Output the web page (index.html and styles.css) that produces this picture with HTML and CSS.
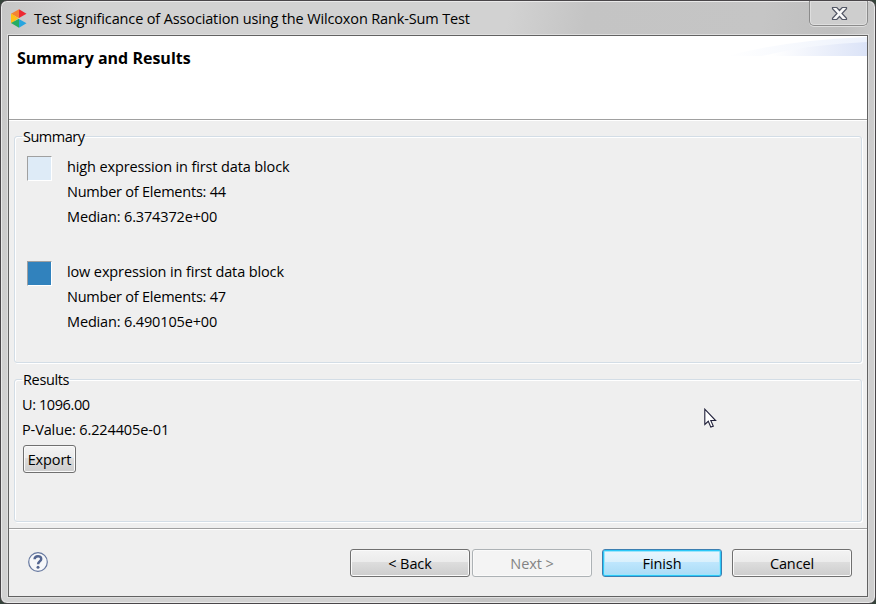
FILE: index.html
```html
<!DOCTYPE html>
<html lang="en">
<head>
<meta charset="utf-8">
<title>Test Significance of Association</title>
<link rel="stylesheet" href="styles.css">
</head>
<body>
<main class="window">
  <header class="titlebar">
    <svg class="logo" width="17" height="19" viewBox="0 0 17 19">
      <path fill="#f58232" d="M1 4.800 9 .3v8.900L1 4.800Z"/>
      <path fill="#ee2932" d="M9 .3 16.500 4.800 9 9Z"/>
      <path fill="#fdbf18" d="M1 4.800 8.500 9.300 1 14Z"/>
      <path fill="#fdbf18" d="M1 4.800 5 7v5L1 14.200Z"/>
      <path fill="#25ac62" d="M1 14 9 9.800v8.900Z"/>
      <path fill="#29a5df" d="m9 10 7.500 4.200L9 18.700Z"/>
    </svg>
    <h1 class="title">Test Significance of Association using the Wilcoxon Rank-Sum Test</h1>
    <button class="close" aria-label="Close">
      <svg width="17" height="15" viewBox="0 0 17 15"><path d="M1.500 1.500h4.300l2.700 3 2.700-3h4.300v1.200L11 7.500l4.500 4.800v1.200h-4.300l-2.700-3-2.700 3H1.500v-1.200L6 7.500 1.500 2.700Z" fill="#fafafa" stroke="#535766" stroke-width="1.200"/></svg>
    </button>
  </header>
  <section class="client">
    <div class="banner">
      <h2>Summary and Results</h2>
      <svg class="swoosh" width="140" height="20" viewBox="0 0 140 20">
        <defs>
          <linearGradient id="fade"><stop offset="0" stop-color="#fff"/><stop offset="1" stop-color="#edf2fc"/></linearGradient>
          <linearGradient id="deep"><stop offset=".1" stop-color="#fff"/><stop offset="1" stop-color="#dbe3f7"/></linearGradient>
        </defs>
        <path fill="url(#fade)" d="M0 20Q60 4 140 1v19Z"/>
        <path fill="url(#deep)" d="M35 20Q85 8 140 6v14Z"/>
      </svg>
    </div>
    <div class="content">
      <fieldset class="group summary">
        <legend><span class="w-summary">Summary</span></legend>
        <div class="block">
          <i class="swatch light"></i>
          <div class="lines">
            <p class="w-line">high expression in first data block</p>
            <p class="w-num">Number of Elements: 44</p>
            <p class="w-med">Median: 6.374372e+00</p>
          </div>
        </div>
        <div class="block">
          <i class="swatch dark"></i>
          <div class="lines">
            <p class="w-line">low expression in first data block</p>
            <p class="w-num">Number of Elements: 47</p>
            <p class="w-med">Median: 6.490105e+00</p>
          </div>
        </div>
      </fieldset>
      <fieldset class="group results">
        <legend><span class="w-results">Results</span></legend>
        <p class="w-u">U: 1096.00</p>
        <p class="w-p">P-Value: 6.224405e-01</p>
        <button class="btn export">Export</button>
      </fieldset>
    </div>
    <footer class="footer">
      <svg class="help" width="20" height="20" viewBox="0 0 20 20">
        <circle cx="10" cy="10" r="9.300" fill="#f6f7f9" stroke="#65779f" stroke-width="1.200"/>
        <path d="M6.600 7.300C6.700 3.200 13.200 3.200 13.200 6.900c0 2.500-3.100 2.500-3.100 5.300" fill="none" stroke="#536590" stroke-width="2.500"/>
        <circle cx="10" cy="15.300" r="1.500" fill="#536590"/>
      </svg>
      <button class="btn back">&lt; Back</button>
      <button class="btn next" disabled>Next &gt;</button>
      <button class="btn finish">Finish</button>
      <button class="btn cancel">Cancel</button>
    </footer>
  </section>
</main>
<svg class="cursor" width="13" height="21" viewBox="0 0 13 21">
  <path d="M.8 1.200v15.300l3.500-3.200 2.500 5.800 2.500-1-2.500-5.600h4.800Z" fill="#fff" stroke="#20203a" stroke-width="1.100"/>
</svg>
</body>
</html>
```
FILE: styles.css
```css
* { box-sizing: border-box; }
body {
  margin: 0;
  width: 876px;
  height: 604px;
  overflow: hidden;
  background: #35433a;
  font: 14.5px/25px "Open Sans", "Noto Sans", sans-serif;
  color: #000;
}
h1, h2, p { margin: 0; white-space: nowrap; }
.window {
  width: 876px;
  height: 604px;
  padding: 0 7px 6px;
  border: 1px solid #494649;
  border-radius: 7px;
  box-shadow: inset 0 0 0 1px #e9e9e9;
  background: linear-gradient(100deg, #c6c6c6 0, #d2d2d2 8%, #d2d2d2 52%, #c4c4c4 60%, #c5c5c5 78%, #bebebe 86%, #cecece 92%, #cecece 100%);
}
.titlebar {
  height: 34px;
  display: flex;
  align-items: flex-start;
}
.logo { margin: 8px 0 0 2px; }
.title {
  margin: 6px 0 0 7px;
  font-size: 14.5px;
  font-weight: 400;
  line-height: 24px;
  letter-spacing: -.14px;
}
.close {
  width: 59px;
  height: 25px;
  margin: 0 0 0 auto;
  padding: 5px 0 0 2px;
  border: 1px solid #8b8b8b;
  border-top: 0;
  border-radius: 0 0 5px 5px;
  background: #cecece;
  box-shadow: inset 0 0 0 1px #dedede, 0 1px #dedede;
  display: flex;
  justify-content: center;
}
.client {
  height: 562px;
  border: 1px solid #626262;
  background: #efefef;
  box-shadow: 0 0 0 1px #dedede;
}
.banner {
  height: 84px;
  display: flex;
  justify-content: space-between;
  background: #fff;
  border-bottom: 1px solid #a0a0a0;
}
.banner h2 {
  margin: 10px 0 0 8px;
  font-size: 16px;
  line-height: 24px;
}
.content {
  height: 408px;
  padding: 7px 5px 0;
  border-top: 1px solid #fff;
}
.group {
  min-width: 0;
  margin: 0;
  padding: 0 7px;
  border: 1px solid #d3dde6;
  border-radius: 3px;
  box-shadow: inset 1px 1px #fff, 1px 1px #fff;
}
.group legend {
  height: 17px;
  padding: 0 1px;
  margin-left: 0;
  line-height: 17px;
}
.summary { height: 235px; }
.results { height: 151px; margin-top: 8px; }
.results legend { margin-bottom: 4px; }
.block { display: flex; height: 105px; padding: 9px 0 0 5px; }
.lines { margin: 0 0 0 15px; }
.w-summary { letter-spacing: -.5px; }
.w-results { letter-spacing: -.35px; }
.w-line { letter-spacing: -.13px; }
.w-num { letter-spacing: -.23px; }
.w-med { letter-spacing: -.15px; }
.w-u { letter-spacing: -.4px; }
.w-p { letter-spacing: -.12px; }
.swatch {
  width: 25px;
  height: 25px;
  margin-top: 2px;
  border: 1px solid;
  border-color: #a0a0a0 #fff #fff #a0a0a0;
}
.light { background: #deebf7; }
.dark { background: #3182bd; }
.btn {
  width: 120px;
  height: 28px;
  padding: 1px 0 0;
  border: 1px solid #707070;
  border-radius: 3px;
  box-shadow: inset 0 0 0 1px #fafafa;
  background: linear-gradient(#f3f3f3, #ebebeb 48%, #dddddd 48%, #cdcdcd);
  font: inherit;
  line-height: 25px;
  letter-spacing: -.1px;
  color: #000;
}
.export { display: block; width: 53px; margin: 3px 0 0 1px; }
.footer {
  height: 68px;
  display: flex;
  padding: 20px 15px 0 19px;
  border-top: 1px solid #a0a0a0;
  box-shadow: inset 0 1px #fff;
}
.help { margin: 3px auto 0 0; }
.next {
  margin: 0 10px 0 2px;
  border-color: #adb2b5;
  background: #f4f4f4;
  color: #838383;
}
.finish {
  margin-right: 10px;
  border-color: #3c7fb1;
  box-shadow: inset 0 0 0 1px #2bc8f8, inset 0 0 0 2px #9ee5fb;
  background: linear-gradient(#eaf6fd, #d9f0fc 48%, #bee6fd 48%, #a9dbf5);
}
.cursor { position: absolute; left: 704px; top: 408px; }
```
